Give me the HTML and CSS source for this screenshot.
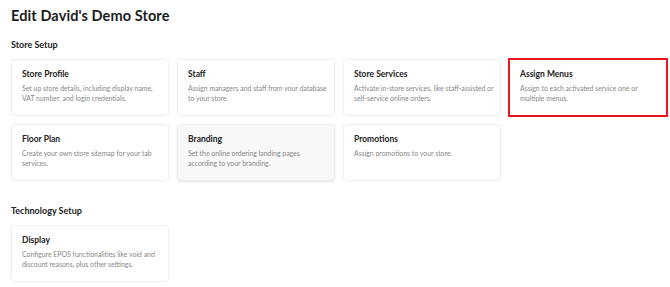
FILE: index.html
```html
<!DOCTYPE html>
<html>
<head>
<meta charset="utf-8">
<link rel="stylesheet" href="styles.css">
</head>
<body>
<main class="page">
  <h1 class="title">Edit David's Demo Store</h1>
  <section class="section">
    <h2 class="section-title">Store Setup</h2>
    <div class="grid">
      <div class="card"><h3 class="card-title">Store Profile</h3><p class="card-desc">Set up store details, including display name, VAT number, and login credentials.</p></div>
      <div class="card"><h3 class="card-title">Staff</h3><p class="card-desc">Assign managers and staff from your database to your store.</p></div>
      <div class="card"><h3 class="card-title">Store Services</h3><p class="card-desc">Activate in-store services, like staff-assisted or self-service online orders.</p></div>
      <div class="card card-selected"><h3 class="card-title">Assign Menus</h3><p class="card-desc">Assign to each activated service one or multiple menus.</p></div>
      <div class="card"><h3 class="card-title">Floor Plan</h3><p class="card-desc">Create your own store sitemap for your tab services.</p></div>
      <div class="card card-hover"><h3 class="card-title">Branding</h3><p class="card-desc">Set the online ordering landing pages according to your branding.</p></div>
      <div class="card"><h3 class="card-title">Promotions</h3><p class="card-desc">Assign promotions to your store.</p></div>
    </div>
  </section>
  <section class="section section-tech">
    <h2 class="section-title">Technology Setup</h2>
    <div class="grid">
      <div class="card"><h3 class="card-title">Display</h3><p class="card-desc">Configure EPOS functionalities like void and discount reasons, plus other settings.</p></div>
    </div>
  </section>
</main>
</body>
</html>
```

FILE: styles.css
```css
* { box-sizing: border-box; }
html, body { margin: 0; padding: 0; background: #fff; }
body { font-family: "Lato", "Noto Sans", sans-serif; color: #222; }
.page { padding: 7px 11px 0 11px; }
.title { margin: 0; font-size: 14.5px; font-weight: 700; line-height: 18px; color: #1d1d1d; letter-spacing: 0.1px; }
.section { margin-top: 14px; }
.section-tech { margin-top: 24px; }
.section-title { margin: 0 0 8px 0; font-size: 9px; font-weight: 700; line-height: 12px; color: #222; }
.grid { display: grid; grid-template-columns: repeat(4, 158px); gap: 8px; }
.card { height: 57px; border: 1px solid #efefef; border-radius: 4px; padding: 9px 6px 0 10px; background: #fff; box-shadow: 0 0 2px rgba(0,0,0,0.03); }
.card-hover { background: #f8f8f8; box-shadow: 0 1px 3px rgba(0,0,0,0.1); }
.card-selected { outline: 2px solid #e8141e; outline-offset: -1px; border-color: #fff; border-radius: 0; }
.card-title { margin: 0; font-size: 8.5px; font-weight: 700; line-height: 10px; color: #222; }
.card-desc { margin: 4px 0 0 0; font-size: 6.9px; line-height: 10px; color: #888; }
```
